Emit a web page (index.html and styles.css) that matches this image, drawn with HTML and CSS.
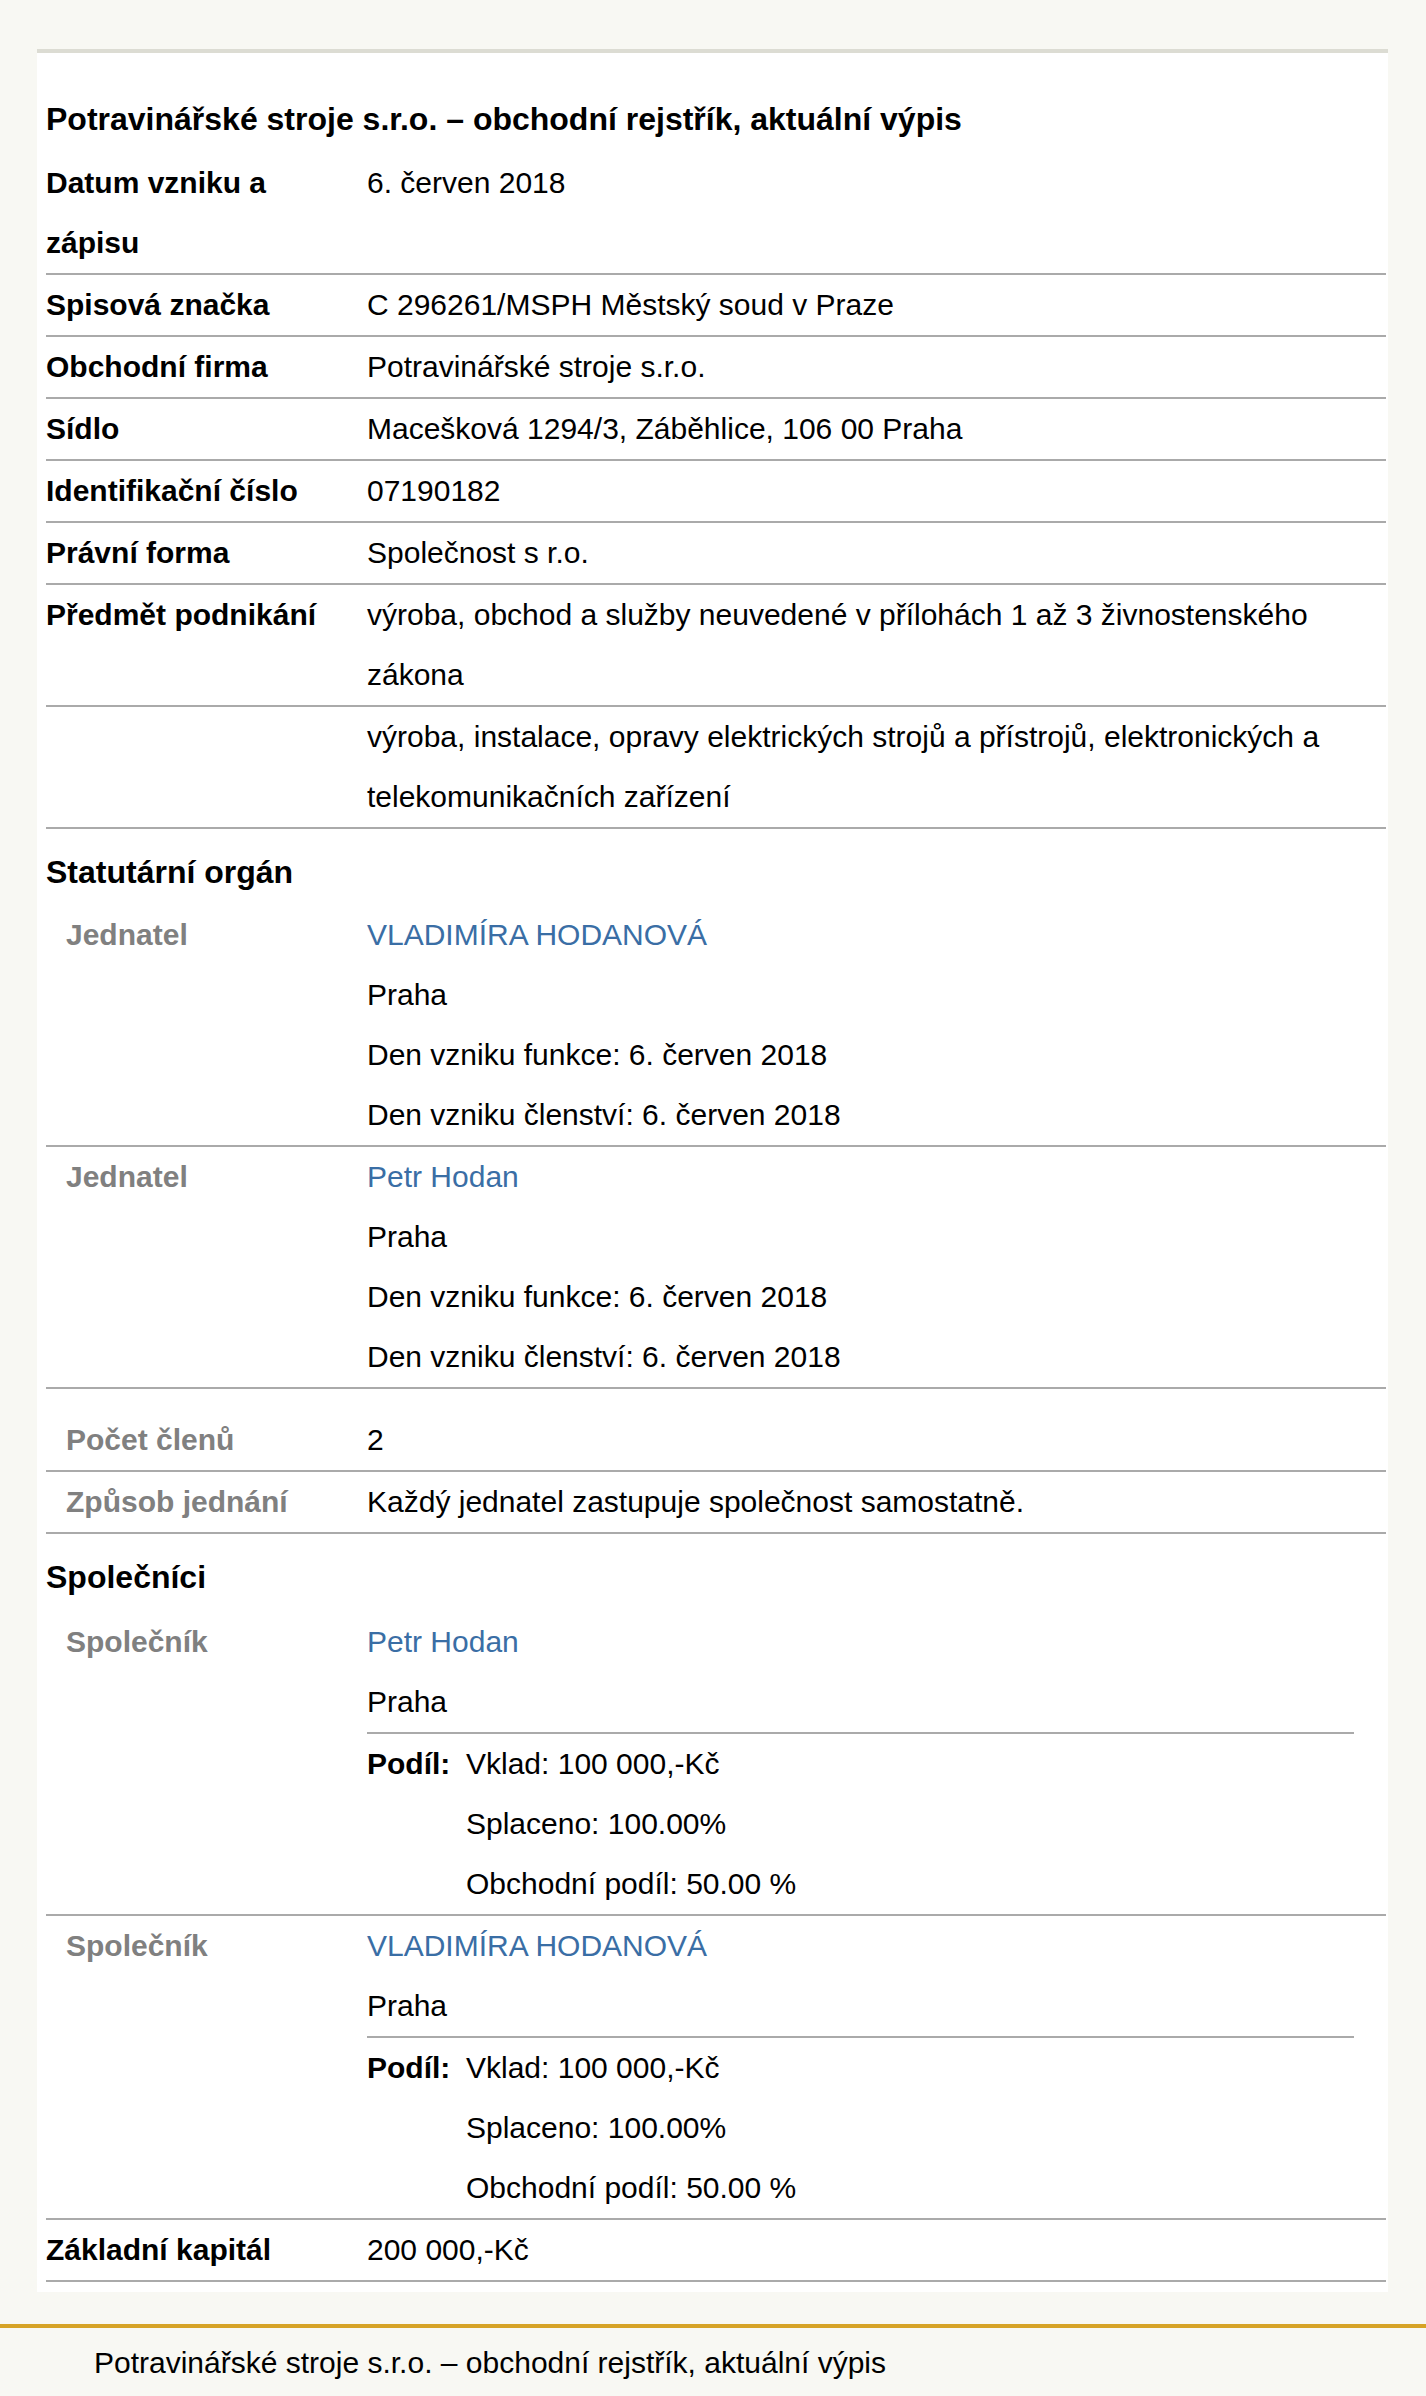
FILE: index.html
```html
<!DOCTYPE html>
<html lang="cs">
<head>
<meta charset="utf-8">
<title>Potravinářské stroje s.r.o. – obchodní rejstřík, aktuální výpis</title>
<link rel="stylesheet" href="styles.css">
</head>
<body>
<div class="page">
  <main class="card">
    <h1 class="title">Potravinářské stroje s.r.o. – obchodní rejstřík, aktuální výpis</h1>

    <div class="row"><div class="label">Datum vzniku a zápisu</div><div class="value">6. červen 2018</div></div>
    <div class="row"><div class="label">Spisová značka</div><div class="value">C 296261/MSPH Městský soud v Praze</div></div>
    <div class="row"><div class="label">Obchodní firma</div><div class="value">Potravinářské stroje s.r.o.</div></div>
    <div class="row"><div class="label">Sídlo</div><div class="value">Macešková 1294/3, Záběhlice, 106 00 Praha</div></div>
    <div class="row"><div class="label">Identifikační číslo</div><div class="value">07190182</div></div>
    <div class="row"><div class="label">Právní forma</div><div class="value">Společnost s r.o.</div></div>
    <div class="row"><div class="label">Předmět podnikání</div><div class="value">výroba, obchod a služby neuvedené v přílohách 1 až 3 živnostenského zákona</div></div>
    <div class="row"><div class="label"></div><div class="value">výroba, instalace, opravy elektrických strojů a přístrojů, elektronických a telekomunikačních zařízení</div></div>

    <h2 class="section">Statutární orgán</h2>
    <div class="row sub"><div class="label">Jednatel</div><div class="value"><a class="person" href="#">VLADIMÍRA HODANOVÁ</a><div>Praha</div><div>Den vzniku funkce: 6. červen 2018</div><div>Den vzniku členství: 6. červen 2018</div></div></div>
    <div class="row sub"><div class="label">Jednatel</div><div class="value"><a class="person" href="#">Petr Hodan</a><div>Praha</div><div>Den vzniku funkce: 6. červen 2018</div><div>Den vzniku členství: 6. červen 2018</div></div></div>
    <div class="row sub spaced"><div class="label">Počet členů</div><div class="value">2</div></div>
    <div class="row sub"><div class="label">Způsob jednání</div><div class="value">Každý jednatel zastupuje společnost samostatně.</div></div>

    <h2 class="section section-wide">Společníci</h2>
    <div class="row sub"><div class="label">Společník</div><div class="value"><a class="person" href="#">Petr Hodan</a><div>Praha</div>
      <div class="share"><div class="share-label">Podíl:</div><div class="share-values"><div>Vklad: 100 000,-Kč</div><div>Splaceno: 100.00%</div><div>Obchodní podíl: 50.00 %</div></div></div>
    </div></div>
    <div class="row sub"><div class="label">Společník</div><div class="value"><a class="person" href="#">VLADIMÍRA HODANOVÁ</a><div>Praha</div>
      <div class="share"><div class="share-label">Podíl:</div><div class="share-values"><div>Vklad: 100 000,-Kč</div><div>Splaceno: 100.00%</div><div>Obchodní podíl: 50.00 %</div></div></div>
    </div></div>
    <div class="row"><div class="label">Základní kapitál</div><div class="value">200 000,-Kč</div></div>
  </main>

  <footer class="footer">Potravinářské stroje s.r.o. – obchodní rejstřík, aktuální výpis</footer>
</div>
</body>
</html>
```

FILE: styles.css
```css
html, body {
  margin: 0;
  padding: 0;
}

body {
  background: #f8f8f3;
  color: #000;
  font-family: "Liberation Sans", Arial, sans-serif;
  font-size: 30px;
  line-height: 60px;
}

.page {
  padding-top: 49px;
}

.card {
  margin-left: 37px;
  width: 1351px;
  box-sizing: border-box;
  background: #fff;
  border-top: 4px solid #dcdcd3;
  padding: 0 2px 10px 9px;
}

.title {
  margin: 36px 0 4px 0;
  font-size: 32px;
  font-weight: bold;
  line-height: 60px;
}

.section {
  margin: 13px 0 3px 0;
  font-size: 32px;
  font-weight: bold;
  line-height: 60px;
}

.section-wide {
  margin-bottom: 5px;
}

.row {
  display: grid;
  grid-template-columns: 321px 1fr;
  border-bottom: 2px solid #aaaaaa;
}

.label {
  font-weight: bold;
  padding-right: 10px;
}

.row.sub .label {
  color: #808080;
  padding-left: 20px;
}

.row.spaced {
  margin-top: 21px;
}

.value {
  font-weight: normal;
}

.person {
  display: block;
  color: #3a6ea5;
  text-decoration: none;
}

.share {
  display: flex;
  border-top: 2px solid #aaaaaa;
  margin-right: 32px;
}

.share-label {
  width: 99px;
  font-weight: bold;
}

.footer {
  margin-top: 32px;
  border-top: 4px solid #d6a326;
  padding: 5px 0 0 94px;
  line-height: 60px;
}
```
